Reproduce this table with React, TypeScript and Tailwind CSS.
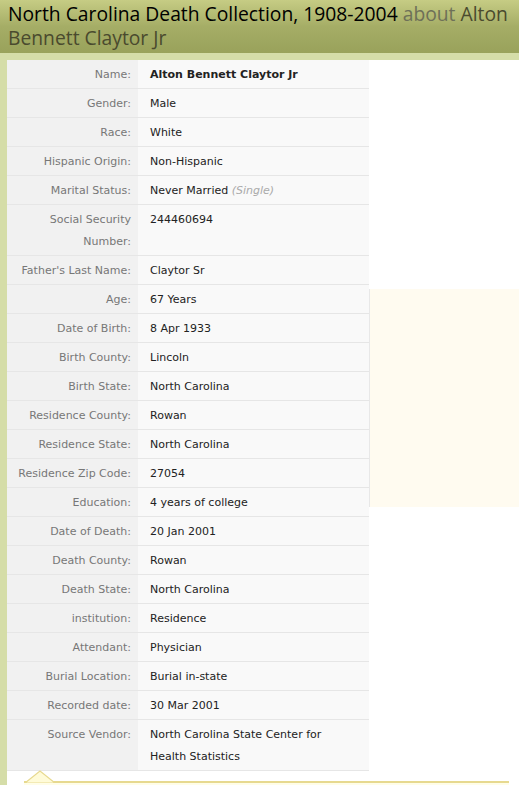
import React from "react";

type Row = { label: React.ReactNode; value: React.ReactNode; bold?: boolean };

const rows: Row[] = [
  { label: "Name:", value: "Alton Bennett Claytor Jr", bold: true },
  { label: "Gender:", value: "Male" },
  { label: "Race:", value: "White" },
  { label: "Hispanic Origin:", value: "Non-Hispanic" },
  {
    label: "Marital Status:",
    value: (
      <>
        Never Married <span className="italic text-[#aaaaaa]">(Single)</span>
      </>
    ),
  },
  {
    label: (
      <>
        Social Security
        <br />
        Number:
      </>
    ),
    value: "244460694",
  },
  { label: "Father's Last Name:", value: "Claytor Sr" },
  { label: "Age:", value: "67 Years" },
  { label: "Date of Birth:", value: "8 Apr 1933" },
  { label: "Birth County:", value: "Lincoln" },
  { label: "Birth State:", value: "North Carolina" },
  { label: "Residence County:", value: "Rowan" },
  { label: "Residence State:", value: "North Carolina" },
  { label: "Residence Zip Code:", value: "27054" },
  { label: "Education:", value: "4 years of college" },
  { label: "Date of Death:", value: "20 Jan 2001" },
  { label: "Death County:", value: "Rowan" },
  { label: "Death State:", value: "North Carolina" },
  { label: "institution:", value: "Residence" },
  { label: "Attendant:", value: "Physician" },
  { label: "Burial Location:", value: "Burial in-state" },
  { label: "Recorded date:", value: "30 Mar 2001" },
  {
    label: "Source Vendor:",
    value: (
      <>
        North Carolina State Center for
        <br />
        Health Statistics
      </>
    ),
  },
];

export default function App() {
  return (
    <div className="w-[519px] h-[785px] overflow-hidden bg-white relative">
      <div
        className="h-[53px] pl-[8px] pr-[2px] pt-[2px] text-[19.3px] leading-[24px] text-black bg-gradient-to-b from-[#c6cc84] via-[#a5ad66] to-[#99a25b]"
        style={{ fontFamily: '"Open Sans", "DejaVu Sans", sans-serif' }}
      >
        <div className="whitespace-nowrap">
          <span>North Carolina Death Collection, 1908-2004</span>{" "}
          <span className="text-[#6e7058]">about</span>{" "}
          <span className="text-[#4a4a2e]">Alton</span>
        </div>
        <div className="text-[#4a4a2e]">Bennett Claytor Jr</div>
      </div>
      <div className="h-[7px] bg-[#d5dda8]" />
      <div className="flex border-l-[7px] border-[#d5dda8] h-[725px]">
        <div className="flex flex-col">
          <div
            className="w-[362px] text-[11px] leading-[22px]"
            style={{ fontFamily: '"DejaVu Sans", Verdana, sans-serif' }}
          >
            {rows.map((r, i) => (
              <div key={i} className="flex border-b border-[#e6e6e6]">
                <div className="w-[131px] shrink-0 bg-[#f1f1f1] text-right text-[#777777] pr-[7px] pt-[4px] pb-[2px]">
                  {r.label}
                </div>
                <div
                  className={
                    "flex-1 bg-[#f9f9f9] pl-[12px] pt-[4px] pb-[2px] text-[#222222] " +
                    (r.bold ? "font-bold" : "")
                  }
                >
                  {r.value}
                </div>
              </div>
            ))}
          </div>
          <div className="relative h-[20px]">
            <div className="absolute left-[17px] right-[-140px] top-[10px] h-[20px] bg-[#fffde8] border-t-2 border-[#e7d98f]" />
            <svg
              className="absolute left-[17px] top-[-1px]"
              width="32"
              height="13"
              viewBox="0 0 32 13"
            >
              <polygon points="1,13 16,1 31,13" fill="#fffbd8" stroke="#e7d98f" strokeWidth="1.2" />
            </svg>
          </div>
        </div>
        <div className="flex-1">
          <div className="mt-[229px] h-[218px] bg-[#fffbf0] border-l border-[#e8e8e8]" />
        </div>
      </div>
    </div>
  );
}
